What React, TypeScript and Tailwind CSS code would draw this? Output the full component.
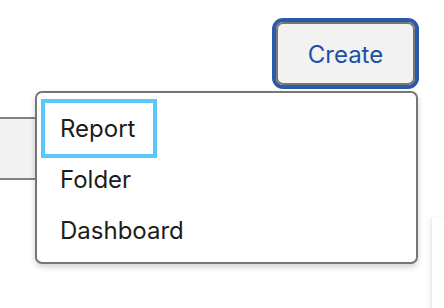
import React from 'react';

const items = ['Report', 'Folder', 'Dashboard'];

export default function App() {
  return (
    <div
      className="relative w-[444px] h-[308px] overflow-hidden bg-white"
      style={{ fontFamily: 'Inter, "Noto Sans", sans-serif' }}
    >
      {/* toolbar */}
      <div className="flex justify-end pt-[18px] pr-[25px]">
        <div className="rounded-[11px] border-4 border-[#2b5ba8]">
          <button className="flex h-[63px] w-[139px] items-center justify-center rounded-[7px] border-2 border-[#767676] bg-[#f2f2f2] pt-[2px] text-[24px] text-[#1f4fa6]">
            Create
          </button>
        </div>
      </div>

      {/* field partly hidden behind the menu */}
      <div className="mt-[28px] h-[63px] w-[120px] border-y-2 border-[#808080] bg-[#f2f2f2]" />

      {/* neighbour on the right edge */}
      <div className="absolute left-[431px] top-[218px] h-[100px] w-[30px] border-l border-[#ececec] shadow-[-2px_0_4px_rgba(0,0,0,0.06)]" />

      {/* dropdown menu */}
      <div className="absolute left-[35px] top-[91px] flex w-[383px] flex-col items-start rounded-[7px] border-2 border-[#767676] bg-white pt-[10px] pb-[6px] shadow-[0_3px_6px_rgba(0,0,0,0.18)]">
        {items.map((label, i) => (
          <div
            key={label}
            className={`ml-[8px] flex h-[51px] items-center pl-[15px] pr-[18px] text-[24px] text-[#1c1c1c] ${
              i === 0 ? 'outline-4 outline-[#5ac8fa]' : ''
            }`}
          >
            {label}
          </div>
        ))}
      </div>
    </div>
  );
}
